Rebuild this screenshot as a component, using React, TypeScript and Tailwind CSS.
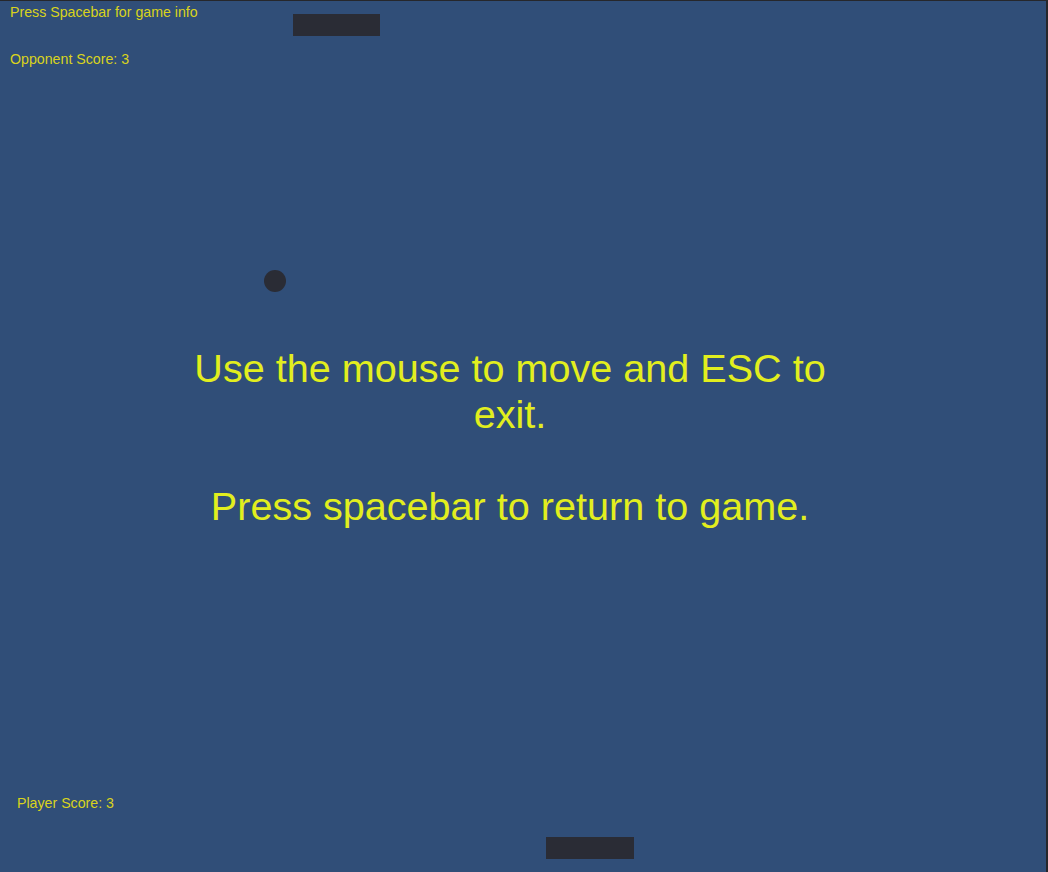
import React from "react";

export default function App() {
  return (
    <div
      className="relative flex items-center w-[1048px] h-[872px] overflow-hidden bg-[#304e78] border-t border-r-2 border-[#26272b]"
      style={{ fontFamily: '"Liberation Sans", Arial, sans-serif' }}
    >
      {/* HUD text overlays */}
      <div className="absolute left-[10px] top-[4px] flex flex-col gap-[33px] text-[14.2px] leading-none text-[#d9d31c]">
        <span>Press Spacebar for game info</span>
        <span>Opponent Score: 3</span>
      </div>
      <div className="absolute left-[17px] top-[795px] text-[14.2px] leading-none text-[#d9d31c]">
        Player Score: 3
      </div>

      {/* Game objects on the play field */}
      <div className="absolute left-[293px] top-[13px] w-[87px] h-[22px] bg-[#2a2c35]" />
      <div className="absolute left-[264px] top-[269px] w-[22px] h-[22px] rounded-full bg-[#2a2c35]" />
      <div className="absolute left-[546px] top-[836px] w-[88px] h-[22px] bg-[#2a2c35]" />

      {/* Info text, centred vertically in the field */}
      <div className="ml-[170px] w-[680px] text-center text-[39.6px] leading-[46px] text-[#e2ee1e]">
        <p>Use the mouse to move and ESC to exit.</p>
        <p>&nbsp;</p>
        <p>Press spacebar to return to game.</p>
      </div>
    </div>
  );
}
